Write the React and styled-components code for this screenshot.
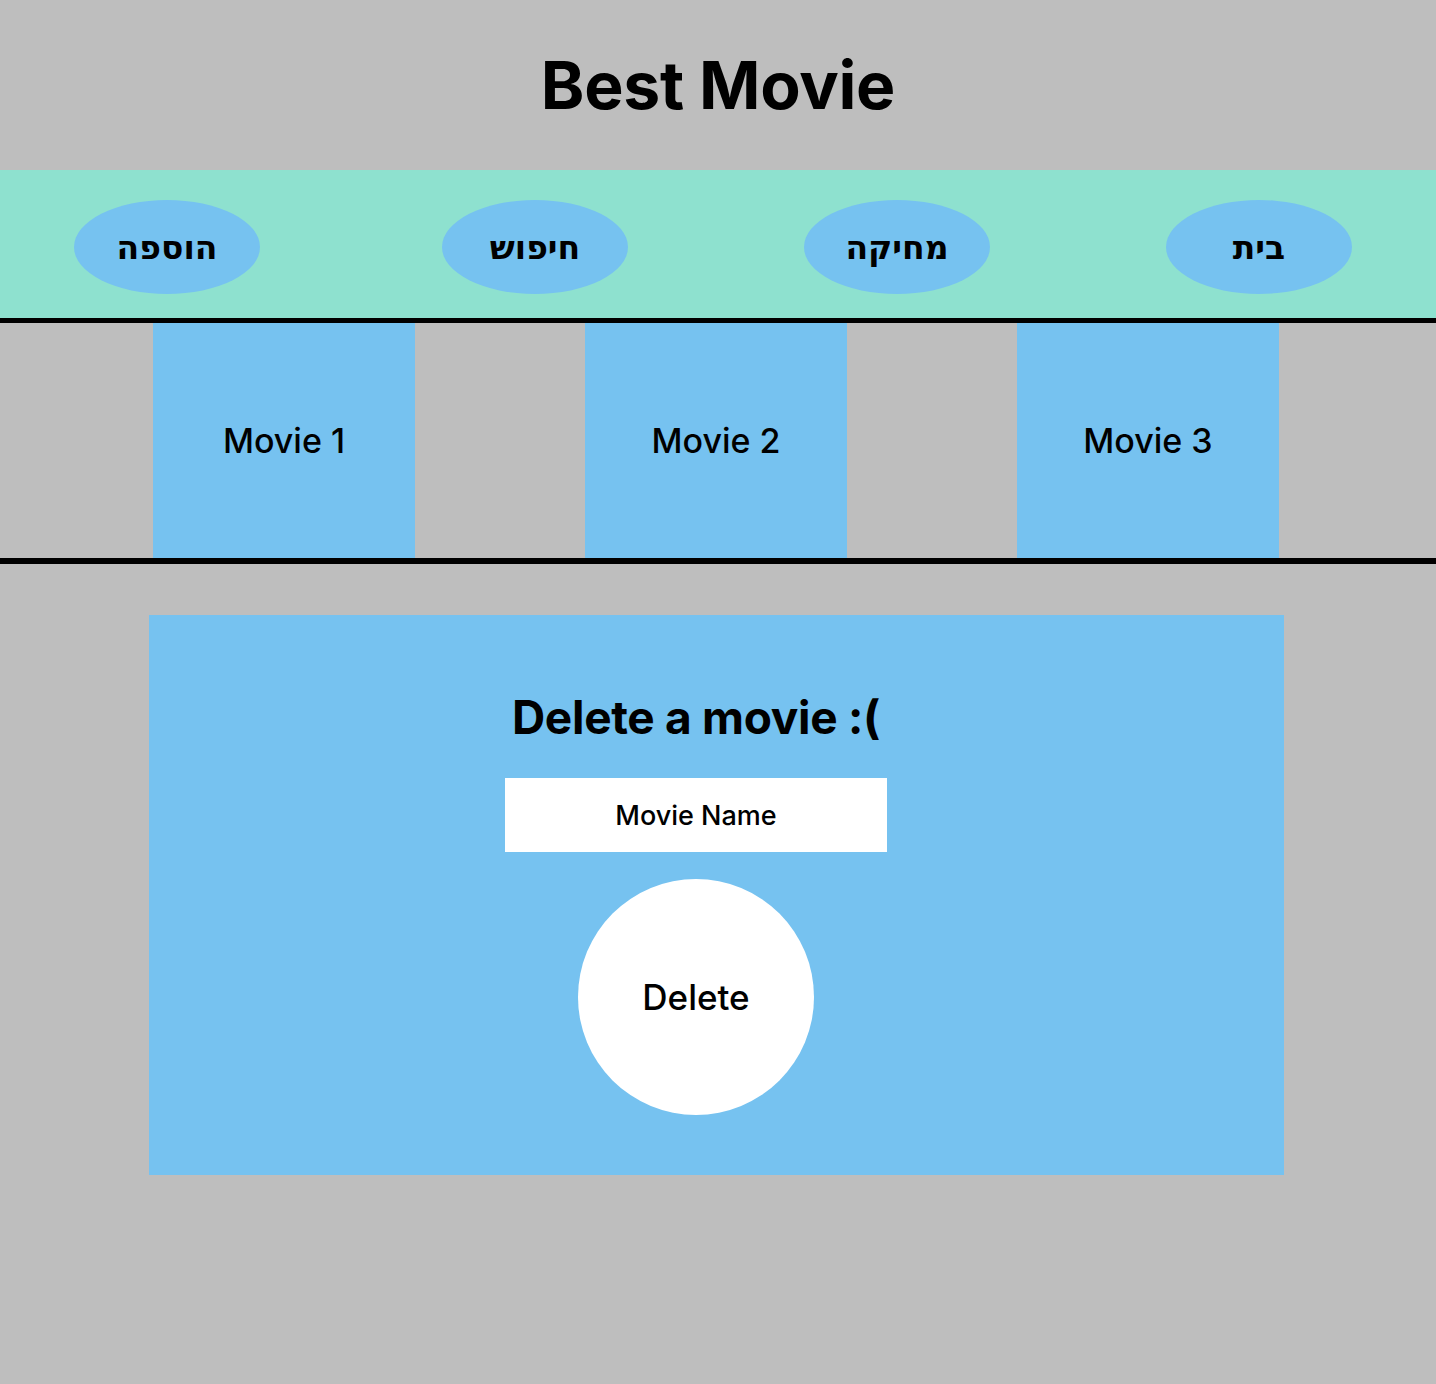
import React from 'react';
import styled, { createGlobalStyle } from 'styled-components';

const Global = createGlobalStyle`
  body {
    margin: 0;
    background: #bebebe;
    font-family: Inter, "Noto Sans", sans-serif;
    color: #000;
  }
`;

const Page = styled.div`
  min-height: 1384px;
  background: #bebebe;
`;

const Header = styled.header`
  height: 170px;
  display: flex;
  align-items: center;
  justify-content: center;
`;

const Title = styled.h1`
  margin: 0;
  font-size: 66px;
  font-weight: 700;
  letter-spacing: -0.3px;
`;

const Nav = styled.nav`
  height: 142px;
  padding: 6px 84px 0 0;
  background: #8ee1cf;
  direction: rtl;
  display: flex;
  align-items: center;
  gap: 176px;
  border-bottom: 5px solid #000;
`;

const NavItem = styled.div`
  width: 186px;
  height: 94px;
  border-radius: 50%;
  background: #76c2f0;
  display: flex;
  align-items: center;
  justify-content: center;
  font-family: Inter, "Noto Sans", "DejaVu Sans", sans-serif;
  font-size: 33px;
  font-weight: 600;
  &:last-child {
    margin-right: 6px;
  }
`;

const MovieRow = styled.section`
  height: 235px;
  display: flex;
  justify-content: center;
  gap: 170px;
  padding-right: 4px;
  border-bottom: 6px solid #000;
`;

const MovieCard = styled.div`
  width: 262px;
  background: #76c2f0;
  display: flex;
  align-items: center;
  justify-content: center;
  font-size: 34px;
  font-weight: 500;
`;

const Panel = styled.section`
  margin: 51px 0 0 149px;
  width: 1135px;
  height: 560px;
  box-sizing: border-box;
  background: #76c2f0;
  display: flex;
  flex-direction: column;
  align-items: center;
  padding: 62px 41px 0 0;
`;

const PanelTitle = styled.h2`
  margin: 0;
  font-size: 46px;
  font-weight: 700;
  letter-spacing: -0.3px;
  line-height: 80px;
`;

const NameInput = styled.input`
  margin-top: 21px;
  width: 382px;
  height: 74px;
  box-sizing: border-box;
  border: none;
  outline: none;
  background: #fff;
  text-align: center;
  font-family: Inter, sans-serif;
  font-size: 27px;
  font-weight: 500;
  &::placeholder {
    color: #000;
  }
`;

const DeleteButton = styled.button`
  margin-top: 27px;
  width: 236px;
  height: 236px;
  border: none;
  border-radius: 50%;
  background: #fff;
  font-family: Inter, sans-serif;
  font-size: 35px;
  font-weight: 500;
  color: #000;
  cursor: pointer;
`;

const navItems = ['בית', 'מחיקה', 'חיפוש', 'הוספה'];
const movies = ['Movie 1', 'Movie 2', 'Movie 3'];

export default function App() {
  return (
    <Page>
      <Global />
      <Header>
        <Title>Best Movie</Title>
      </Header>
      <Nav>
        {navItems.map((n) => (
          <NavItem key={n}>{n}</NavItem>
        ))}
      </Nav>
      <MovieRow>
        {movies.map((m) => (
          <MovieCard key={m}>{m}</MovieCard>
        ))}
      </MovieRow>
      <Panel>
        <PanelTitle>Delete a movie :(</PanelTitle>
        <NameInput placeholder="Movie Name" />
        <DeleteButton>Delete</DeleteButton>
      </Panel>
    </Page>
  );
}
